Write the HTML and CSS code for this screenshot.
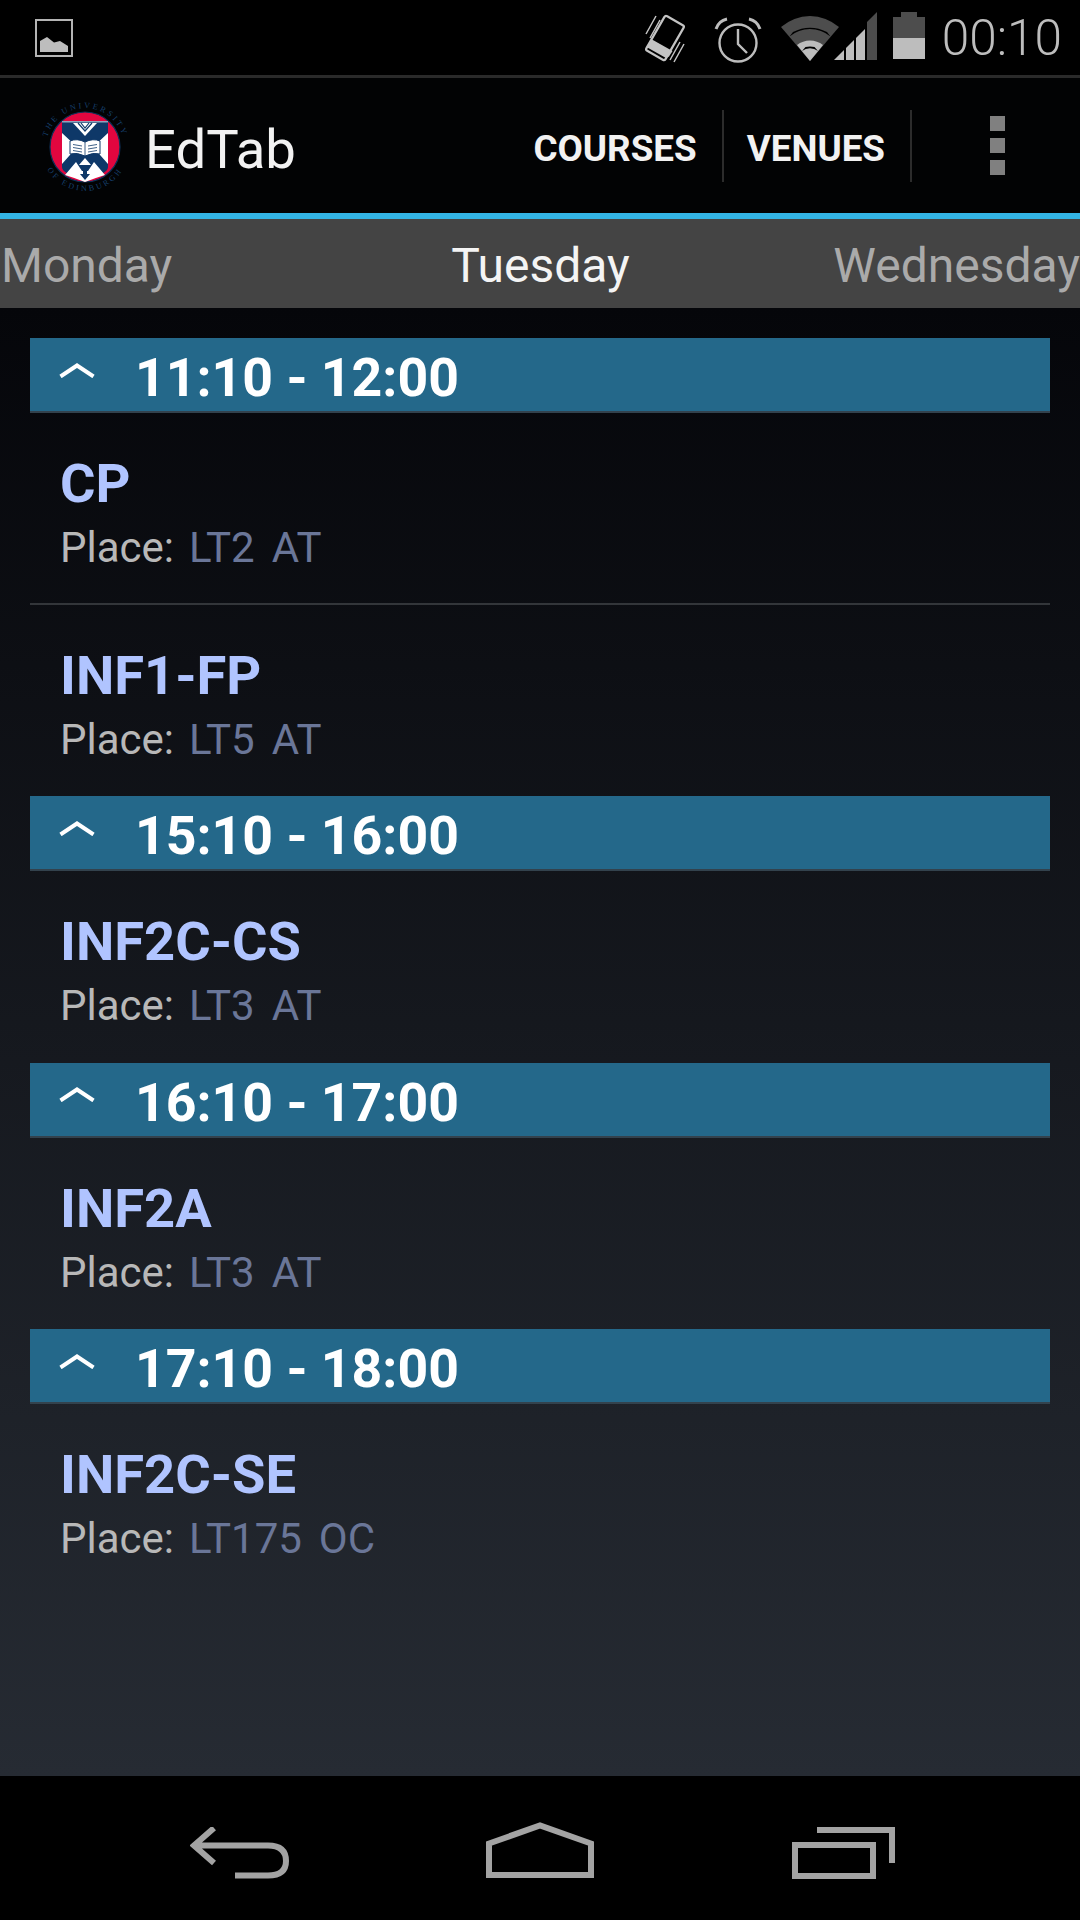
FILE: index.html
```html
<!DOCTYPE html>
<html lang="en">
<head>
<meta charset="utf-8">
<title>EdTab</title>
<link rel="stylesheet" href="styles.css">
</head>
<body>
<div class="screen">
  <header class="statusbar">
    <svg class="st-pic" viewBox="0 0 38 38"><rect x="1" y="1" width="36" height="36" fill="none" stroke="#b4b4b4" stroke-width="2"/><path d="M5 33V22L12 18L19 23.500L25 22L33 27V33Z" fill="#bdbdbd"/></svg>
    <div class="st-right">
      <svg class="st-vib" viewBox="0 0 44 50"><g fill="none" stroke="#c4c4c4"><rect x="11" y="5" width="22" height="40" rx="2" stroke-width="2.200" transform="rotate(30 22 25)"/><path d="M3 21L13 3M7 25L17 7M27 47L37 29M31 49L41 31" stroke-width="1.500"/></g><path d="M3.500 34L23 45L26 43.500L29.500 38L9 26.500Z" fill="#c4c4c4"/></svg>
      <svg class="st-clock" viewBox="0 0 48 48"><g fill="none" stroke="#bdbdbd"><circle cx="24" cy="27" r="18.500" stroke-width="2.400"/><path d="M24 13V28L33 37" stroke-width="2.400"/><path d="M2 13A15 15 0 0 1 13 3M35 3A15 15 0 0 1 46 13" stroke-width="3"/></g></svg>
      <svg class="st-wifi" viewBox="0 0 58 46"><path d="M0 12A44 44 0 0 1 58 12L29 46Z" fill="#4d4d4d"/><path d="M8.500 21.500A32 32 0 0 1 49.500 21.500L46 17A38 38 0 0 0 12 17Z" fill="#000"/><path d="M16 30A21 21 0 0 1 42 30L29 46Z" fill="#bdbdbd"/><path d="M21 36A13 13 0 0 1 37 36L33.500 32A19 19 0 0 0 24.500 32Z" fill="#000"/></svg>
      <svg class="st-signal" viewBox="0 0 43 48"><path d="M0 48L10 38V48Z" fill="#bdbdbd"/><path d="M12 36L20 28V48H12Z" fill="#bdbdbd"/><path d="M22 26L31 17V48H22Z" fill="#bdbdbd"/><path d="M33 10L43 0V48H33Z" fill="#4d4d4d"/></svg>
      <svg class="st-batt" viewBox="0 0 32 47"><path d="M8 0H24V5H32V26H0V5H8Z" fill="#4d4d4d"/><rect x="0" y="26" width="32" height="21" fill="#bdbdbd"/></svg>
      <span class="st-time">00:10</span>
    </div>
  </header>

  <nav class="actionbar">
    <svg class="logo" viewBox="0 0 90 90">
      <defs><path id="ringtop" d="M6 45A39 39 0 0 1 84 45"/><path id="ringbot" d="M1 45A44 44 0 0 0 89 45"/></defs>
      <text class="logo-ring"><textPath href="#ringtop" startOffset="50%" text-anchor="middle">THE UNIVERSITY</textPath></text>
      <text class="logo-ring"><textPath href="#ringbot" startOffset="50%" text-anchor="middle">OF EDINBURGH</textPath></text>
      <circle cx="45" cy="45" r="35" fill="#e2063f" stroke="#0f3158" stroke-width="1.200"/>
      <path d="M22 20H68V65Q68 72 45 78Q22 72 22 65Z" fill="#0e3868"/>
      <rect x="22" y="19" width="46" height="1.500" fill="#8fa3bc"/>
      <path d="M22 31L37 45L22 62ZM68 31L53 45L68 62Z" fill="#fff"/>
      <path d="M33 21H57L45 34Z" fill="#fff"/>
      <path d="M38 21L45 29L52 21M41 21L45 26L49 21" fill="none" stroke="#0e3868" stroke-width="1.200"/>
      <path d="M30 39Q37 36 45 40Q53 36 60 39V52Q53 50 45 54Q37 50 30 52Z" fill="#fff" stroke="#0e3868" stroke-width="1"/>
      <path d="M45 40V54M33 42.500L42 44M33 45.500L42 47M33 48.500L42 50M57 42.500L48 44M57 45.500L48 47M57 48.500L48 50" stroke="#0e3868" stroke-width=".8" fill="none"/>
      <path d="M45 56L51 63H39Z" fill="#fff"/>
      <path d="M25 73L36 60L42 69H48L54 60L65 73Q55 76 45 80Q35 76 25 73Z" fill="#fff"/>
      <path d="M43 67H47V72H50L45 78L40 72H43Z" fill="#0e3868"/>
    </svg>
    <h1 class="app-title">EdTab</h1>
    <div class="actions">
      <a class="action action-courses">COURSES</a>
      <a class="action action-venues">VENUES</a>
      <div class="overflow"><i></i><i></i><i></i></div>
    </div>
  </nav>

  <div class="tabs">
    <span class="tab tab-left">Monday</span>
    <span class="tab tab-active">Tuesday</span>
    <span class="tab tab-right">Wednesday</span>
  </div>

  <main class="list">
    <section class="slot">
      <div class="slot-head"><svg class="chev" viewBox="0 0 36 15"><path d="M1.500 13.500L18 2.500L34.500 13.500" fill="none" stroke="#fff" stroke-width="4"/></svg><h2>11:10 - 12:00</h2></div>
      <div class="entry entry-div"><h3>CP</h3><p>Place:<span class="v1">LT2</span><span class="v2">AT</span></p></div>
      <div class="entry"><h3>INF1-FP</h3><p>Place:<span class="v1">LT5</span><span class="v2">AT</span></p></div>
    </section>
    <section class="slot">
      <div class="slot-head"><svg class="chev" viewBox="0 0 36 15"><path d="M1.500 13.500L18 2.500L34.500 13.500" fill="none" stroke="#fff" stroke-width="4"/></svg><h2>15:10 - 16:00</h2></div>
      <div class="entry"><h3>INF2C-CS</h3><p>Place:<span class="v1">LT3</span><span class="v2">AT</span></p></div>
    </section>
    <section class="slot">
      <div class="slot-head"><svg class="chev" viewBox="0 0 36 15"><path d="M1.500 13.500L18 2.500L34.500 13.500" fill="none" stroke="#fff" stroke-width="4"/></svg><h2>16:10 - 17:00</h2></div>
      <div class="entry"><h3>INF2A</h3><p>Place:<span class="v1">LT3</span><span class="v2">AT</span></p></div>
    </section>
    <section class="slot">
      <div class="slot-head"><svg class="chev" viewBox="0 0 36 15"><path d="M1.500 13.500L18 2.500L34.500 13.500" fill="none" stroke="#fff" stroke-width="4"/></svg><h2>17:10 - 18:00</h2></div>
      <div class="entry"><h3>INF2C-SE</h3><p>Place:<span class="v1">LT175</span><span class="v2">OC</span></p></div>
    </section>
  </main>

  <footer class="navbar">
    <svg class="nav-back" viewBox="0 0 100 52"><path d="M24 1L4 18.500L24 36M4 18.500H78Q96 18.500 96 34Q96 48.500 78 48.500H45" fill="none" stroke="#a3a3a3" stroke-width="6"/></svg>
    <svg class="nav-home" viewBox="0 0 108 56"><path d="M3 53V21.500L54 3.500L105 21.500V53Z" fill="none" stroke="#a3a3a3" stroke-width="6"/></svg>
    <svg class="nav-recent" viewBox="0 0 103 52"><path d="M3 18H81V49H3Z" fill="none" stroke="#a3a3a3" stroke-width="6"/><path d="M25 3H100V36" fill="none" stroke="#a3a3a3" stroke-width="6"/></svg>
  </footer>
</div>
</body>
</html>
```
FILE: styles.css
```css
* { box-sizing: border-box; }
html, body { margin: 0; padding: 0; background: #000; }
body { font-family: Roboto, "Noto Sans", sans-serif; }
h1, h2, h3, p { margin: 0; font: inherit; }
svg { display: block; flex: none; }

.screen { width: 1080px; height: 1920px; display: flex; flex-direction: column; overflow: hidden; }

.statusbar { height: 78px; flex: none; background: #000; border-bottom: 3px solid #2a2a2a; display: flex; align-items: flex-start; justify-content: space-between; padding: 19px 18px 0 35px; }
.st-pic { width: 38px; height: 38px; }
.st-right { display: flex; align-items: flex-start; margin-top: -7px; }
.st-vib { width: 44px; height: 50px; margin-top: 1px; }
.st-clock { width: 48px; height: 48px; margin: 4px 0 0 27px; }
.st-wifi { width: 58px; height: 46px; margin: 3px 0 0 19px; }
.st-signal { width: 43px; height: 48px; margin: 0 0 0 -5px; }
.st-batt { width: 32px; height: 47px; margin: 0 0 0 16px; }
.st-time { font-size: 49.500px; font-weight: 300; color: #bdbdbd; line-height: 52px; margin-left: 17px; }

.actionbar { height: 135px; flex: none; background: #020304; display: flex; align-items: center; padding-left: 40px; }
.logo { width: 90px; height: 90px; margin-top: 3px; }
.app-title { font-size: 54.500px; color: #f2f2f2; margin: 6px 0 0 15px; line-height: 64px; }
.actions { margin-left: auto; display: flex; align-items: center; height: 72px; }
.action { font-size: 36.800px; font-weight: 700; color: #f2f2f2; height: 72px; line-height: 78px; border-right: 2px solid #2c2c2c; }
.action-courses { padding: 0 25px; }
.action-venues { padding: 0 25px 0 23px; }
.overflow { width: 168px; display: flex; flex-direction: column; gap: 7px; padding-left: 78px; }
.overflow i { display: block; width: 15px; height: 15px; background: #808080; }

.tabs { height: 95px; flex: none; background: #444; border-top: 6px solid #33b5e5; display: grid; grid-template-columns: 1fr auto 1fr; align-items: center; padding: 3px 0 0 1px; font-size: 48px; }
.tab { color: #aaa; }
.tab-left { justify-self: start; }
.tab-right { justify-self: end; }
.tab-active { color: #f4f4f4; }

.list { flex: 1; padding: 30px 30px 0; background: linear-gradient(#05060a, #262b33); }
.slot-head { height: 75px; background: #24688a; border-bottom: 2px solid #33424d; display: flex; align-items: center; padding-left: 29px; color: #fff; }
.chev { width: 36px; height: 15px; margin-top: -9px; }
.slot-head h2 { font-size: 53.600px; font-weight: 700; margin: 6px 0 0 40px; }
.entry { height: 191.500px; padding: 41px 0 0 30px; }
.entry-div { border-bottom: 2px solid #33363a; }
.entry h3 { font-size: 54.300px; font-weight: 700; color: #b0c4ff; line-height: 60px; }
.entry p { font-size: 42px; color: #b8b8b8; line-height: 60px; margin-top: 4px; }
.v1 { color: #6a7698; margin-left: 15px; }
.v2 { color: #6a7698; margin-left: 17px; }

.navbar { height: 144px; flex: none; background: #000; display: flex; align-items: flex-start; }
.nav-back { width: 100px; height: 52px; margin: 51px 0 0 190px; }
.nav-home { width: 108px; height: 56px; margin: 46px 0 0 196px; }
.nav-recent { width: 103px; height: 52px; margin: 51px 0 0 198px; }

.logo-ring { font-family: "Liberation Serif", serif; font-size: 8px; letter-spacing: 2.600px; fill: #16406e; }
```
